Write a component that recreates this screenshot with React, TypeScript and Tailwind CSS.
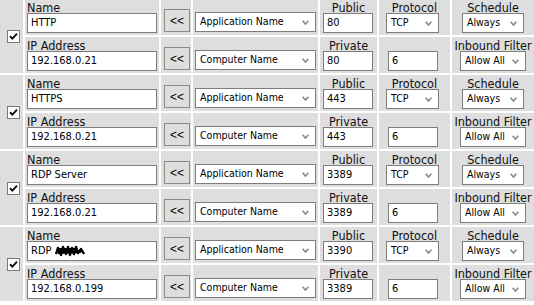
import React from "react";

type Entry = { name: string; ip: string; pub: string; priv: string; scribble?: boolean };

const entries: Entry[] = [
  { name: "HTTP", ip: "192.168.0.21", pub: "80", priv: "80" },
  { name: "HTTPS", ip: "192.168.0.21", pub: "443", priv: "443" },
  { name: "RDP Server", ip: "192.168.0.21", pub: "3389", priv: "3389" },
  { name: "RDP ", ip: "192.168.0.199", pub: "3390", priv: "3389", scribble: true },
];

function Chevron() {
  return (
    <svg width="7" height="5" viewBox="0 0 7 5" className="shrink-0">
      <path d="M0.6 0.7 L3.5 4 L6.4 0.7" fill="none" stroke="#8c8c8c" strokeWidth="1.7" />
    </svg>
  );
}

function Scribble() {
  return (
    <svg width="30" height="12" viewBox="0 0 30 12" className="shrink-0">
      <path
        d="M1 9 L3 3 L6 10 L8 2 L11 9 L13 2 L15 10 L17 3 L19 9 L21 2 L23 8 L26 4 L29 9"
        fill="none"
        stroke="#000"
        strokeWidth="2.4"
        strokeLinejoin="round"
      />
      <path d="M2 6 L28 6 M3 8 L26 7 M4 4 L22 4" stroke="#000" strokeWidth="2" />
    </svg>
  );
}

function Label({ children, center }: { children?: React.ReactNode; center?: boolean }) {
  return (
    <div
      className={`h-[14px] whitespace-nowrap pt-[1px] text-[12.5px] leading-[15px] text-[#111] ${center ? "text-center" : ""}`}
    >
      {children}
    </div>
  );
}

function TextBox({ value, className, scribble }: { value: string; className: string; scribble?: boolean }) {
  return (
    <div
      className={`flex h-[20px] items-center border border-[#7d7d7d] bg-white pl-[3px] text-[11px] whitespace-pre text-black ${className}`}
    >
      <span>{value}</span>
      {scribble && <Scribble />}
    </div>
  );
}

function SelectBox({ value, className }: { value: string; className: string }) {
  return (
    <div
      className={`flex h-[20px] items-center justify-between border border-[#7d7d7d] bg-white pl-[4px] pr-[6px] text-[10.5px] whitespace-nowrap text-black ${className}`}
    >
      <span>{value}</span>
      <Chevron />
    </div>
  );
}

function Arrow() {
  return (
    <div className="bg-[#dedede] pl-[3px] pt-[10px]">
      <div className="flex h-[23px] w-[26px] items-center justify-center border border-[#8a8a8a] bg-[#dedede] font-['Liberation_Sans',sans-serif] text-[12px] text-black">
        &lt;&lt;
      </div>
    </div>
  );
}

function CheckBox() {
  return (
    <div className="row-span-2 flex items-center bg-[#dedede] pl-[7px]">
      <div className="flex h-[13px] w-[13px] items-center justify-center border border-[#7a7a7a] bg-white">
        <svg width="9" height="9" viewBox="0 0 9 9">
          <path d="M1 4.2 L3.4 6.6 L8 1.6" fill="none" stroke="#111" strokeWidth="2" />
        </svg>
      </div>
    </div>
  );
}

const cell = "bg-[#dedede]";

export default function App() {
  return (
    <div className="h-[305px] w-[534px] overflow-hidden bg-white font-['DejaVu_Sans_Condensed','DejaVu_Sans',sans-serif]">
      <div className="-mt-px grid grid-cols-[23px_134px_30px_125px_57px_71px_82px] auto-rows-[36px] gap-[2px] bg-white">
        {entries.map((e, i) => (
          <React.Fragment key={i}>
            <CheckBox />
            <div className={`${cell} pl-[2px]`}>
              <Label>Name</Label>
              <TextBox value={e.name} className="w-[130px]" scribble={e.scribble} />
            </div>
            <Arrow />
            <div className={`${cell} pl-[2px] pt-[13px]`}>
              <SelectBox value="Application Name" className="w-[121px]" />
            </div>
            <div className={cell}>
              <Label center>Public</Label>
              <TextBox value={e.pub} className="ml-[3px] w-[50px]" />
            </div>
            <div className={cell}>
              <Label center>Protocol</Label>
              <SelectBox value="TCP" className="ml-[7px] w-[53px]" />
            </div>
            <div className={`${cell} flex flex-col items-center`}>
              <Label center>Schedule</Label>
              <SelectBox value="Always" className="w-[62px]" />
            </div>

            <div className={`${cell} pl-[2px]`}>
              <Label>IP Address</Label>
              <TextBox value={e.ip} className="w-[130px]" />
            </div>
            <Arrow />
            <div className={`${cell} pl-[2px] pt-[13px]`}>
              <SelectBox value="Computer Name" className="w-[121px]" />
            </div>
            <div className={cell}>
              <Label center>Private</Label>
              <TextBox value={e.priv} className="ml-[3px] w-[50px]" />
            </div>
            <div className={cell}>
              <Label />
              <TextBox value="6" className="ml-[9px] w-[50px]" />
            </div>
            <div className={`${cell} flex flex-col items-center`}>
              <Label center>Inbound Filter</Label>
              <SelectBox value="Allow All" className="w-[66px]" />
            </div>
          </React.Fragment>
        ))}
      </div>
    </div>
  );
}
